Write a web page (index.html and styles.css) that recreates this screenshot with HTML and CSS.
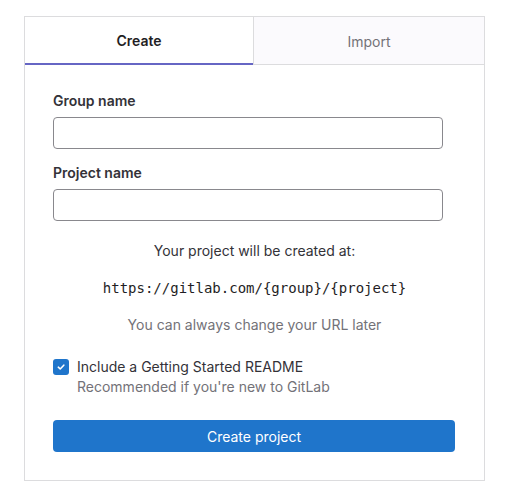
FILE: index.html
```html
<!DOCTYPE html>
<html>
<head>
<meta charset="utf-8">
<link rel="stylesheet" href="styles.css">
</head>
<body>
<div class="card">
  <div class="tabs">
    <div class="tab active">Create</div>
    <div class="tab">Import</div>
  </div>
  <div class="body">
    <label class="label">Group name</label>
    <input class="input" type="text">
    <label class="label second">Project name</label>
    <input class="input" type="text">
    <p class="info">Your project will be created at:</p>
    <p class="url">https://gitlab.com/{group}/{project}</p>
    <p class="hint">You can always change your URL later</p>
    <div class="check">
      <span class="box"><svg width="10" height="10" viewBox="0 0 10 10"><path d="M2.3 5.2 L4.2 7 L7.8 3.2" fill="none" stroke="#fff" stroke-width="1.6" stroke-linecap="round" stroke-linejoin="round"/></svg></span>
      <div class="check-text">
        <div class="check-title">Include a Getting Started README</div>
        <div class="check-help">Recommended if you're new to GitLab</div>
      </div>
    </div>
    <button class="btn">Create project</button>
  </div>
</div>
</body>
</html>
```

FILE: styles.css
```css
* { box-sizing: border-box; }
html, body { margin: 0; padding: 0; background: #fff; }
body {
  font-family: Inter, "Noto Sans", sans-serif;
  color: #333238;
  font-size: 14px;
  padding: 16px 0 0 24px;
}
.card {
  width: 461px;
  height: 465px;
  border: 1px solid #dcdcde;
  display: flex;
  flex-direction: column;
}
.tabs {
  display: flex;
  height: 48px;
  flex: none;
}
.tab {
  flex: 1;
  display: flex;
  align-items: center;
  justify-content: center;
  font-size: 14px;
  color: #737278;
  background: #fbfafd;
  border-left: 1px solid #dcdcde;
  border-bottom: 1px solid #dcdcde;
  padding-top: 1px;
}
.tab.active {
  flex: none;
  width: 228px;
  background: #fff;
  color: #1f1e24;
  font-weight: 600;
  border-left: none;
  border-bottom: 2px solid #6666c4;
}
.body {
  padding: 26px 28px 28px 28px;
  display: flex;
  flex-direction: column;
  flex: none;
}
.label {
  display: block;
  font-weight: 600;
  font-size: 14px;
  line-height: 20px;
  color: #333238;
  margin-bottom: 6px;
}
.label.second { margin-top: 14px; }
.input {
  width: 390px;
  height: 32px;
  border: 1px solid #89888d;
  border-radius: 4px;
  background: #fff;
  margin: 0;
  padding: 0 12px;
  font-family: inherit;
}
.info {
  margin: 20px 0 0;
  text-align: center;
  line-height: 20px;
  color: #333238;
}
.url {
  margin: 17px 0 0;
  text-align: center;
  font-family: "DejaVu Sans Mono", "Liberation Mono", monospace;
  font-size: 14px;
  line-height: 20px;
  color: #1f1e24;
}
.hint {
  margin: 17px 0 0;
  text-align: center;
  line-height: 20px;
  color: #737278;
}
.check {
  display: flex;
  gap: 8px;
  margin-top: 22px;
}
.box {
  width: 16px;
  height: 16px;
  border-radius: 3px;
  background: #1f75cb;
  display: flex;
  align-items: center;
  justify-content: center;
  margin-top: 2px;
  flex: none;
}
.check-title { line-height: 20px; color: #333238; }
.check-help { line-height: 20px; color: #737278; }
.btn {
  margin-top: 23px;
  height: 32px;
  width: 402px;
  border: none;
  border-radius: 4px;
  background: #1f75cb;
  color: #fff;
  font-family: inherit;
  font-size: 14px;
  padding: 0;
}
```
